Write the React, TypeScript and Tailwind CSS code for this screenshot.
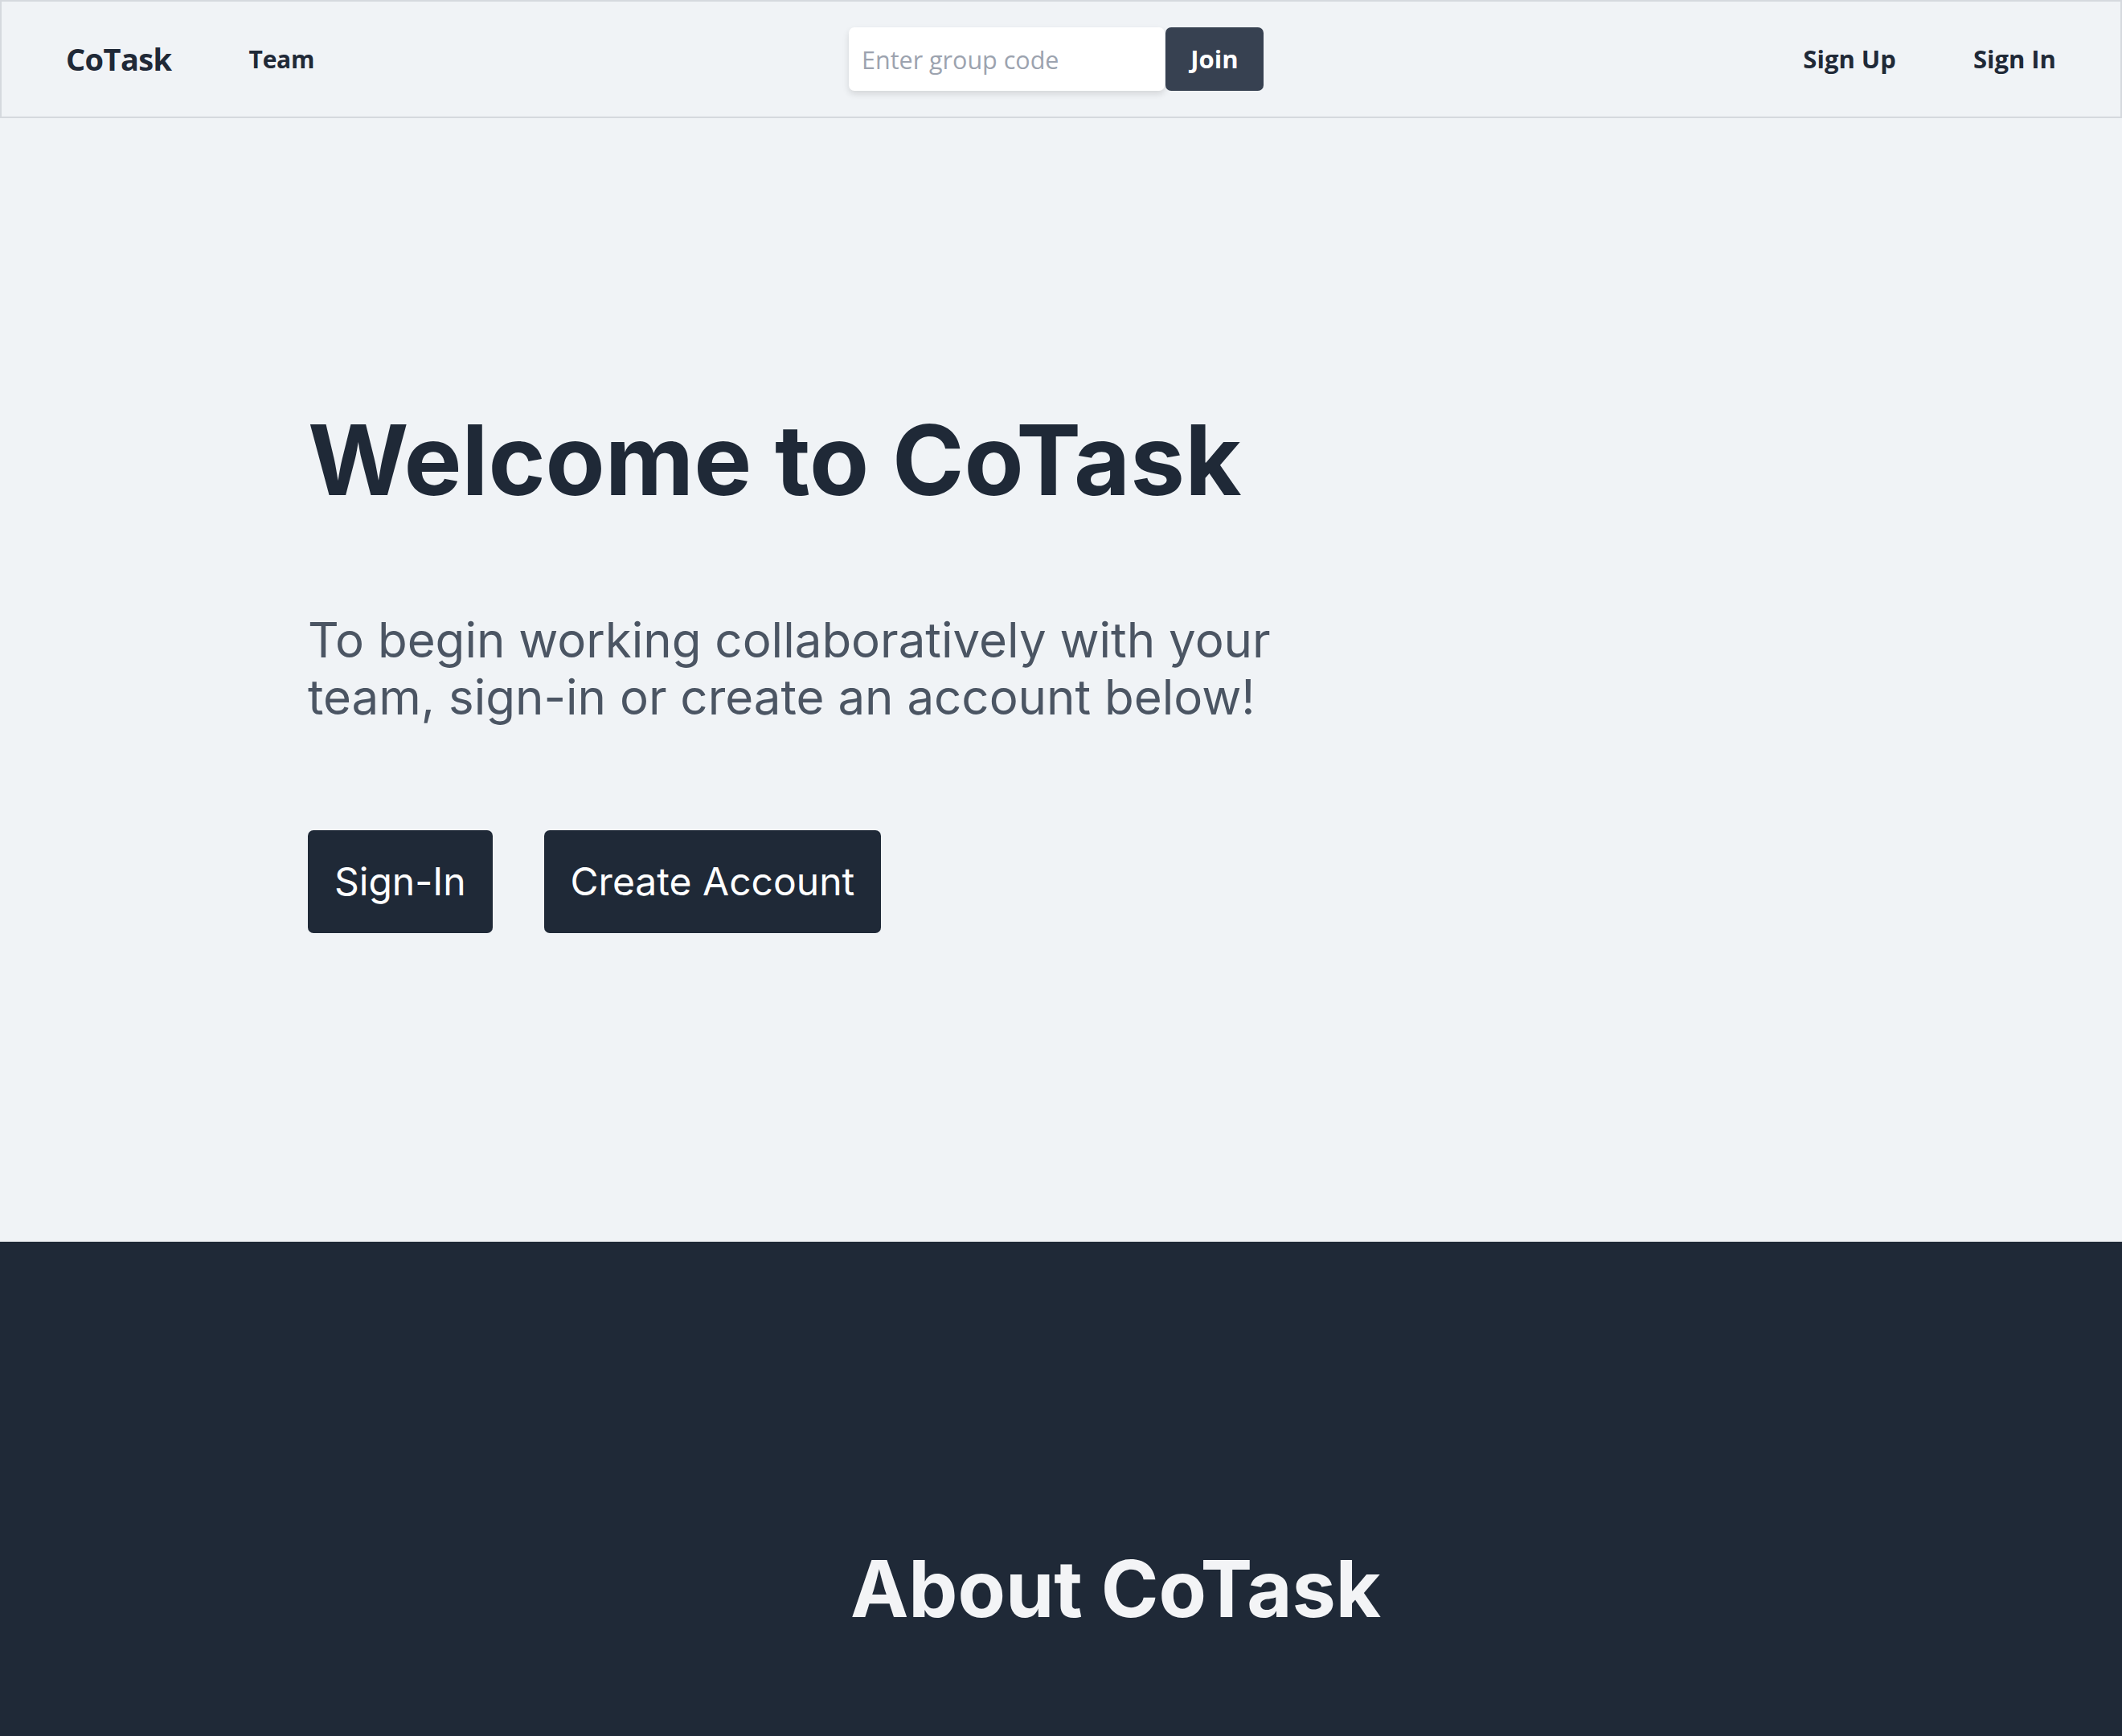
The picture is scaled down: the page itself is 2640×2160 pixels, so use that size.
import React from "react";

export default function App() {
  return (
    <div className="min-h-screen w-full bg-[#f0f3f6]">
      <nav
        className="grid h-[147px] grid-cols-[1fr_auto_1fr] items-center border-2 border-[#d5d9de] bg-[#f0f3f6] px-[80px] text-[#1f2937]"
        style={{ fontFamily: '"Open Sans", "Noto Sans", sans-serif' }}
      >
        <div className="flex items-center gap-[96px]">
          <span className="text-[38px] font-bold tracking-[-0.6px]">CoTask</span>
          <span className="text-[30px] font-bold tracking-[-0.3px]">Team</span>
        </div>
        <div className="mr-[12px] flex items-center">
          <input
            type="text"
            placeholder="Enter group code"
            className="h-[79px] w-[393px] rounded-[7px] bg-white px-[16px] text-[30.5px] text-[#1f2937] shadow-[0_4px_8px_rgba(0,0,0,0.12)] outline-none placeholder:text-[#9ca3af]"
          />
          <button className="ml-[1px] h-[79px] w-[122px] rounded-[7px] bg-[#374151] text-[31px] font-bold text-white">
            Join
          </button>
        </div>
        <div className="flex items-center justify-end gap-[96px]">
          <span className="text-[31px] font-bold">Sign Up</span>
          <span className="text-[31px] font-bold">Sign In</span>
        </div>
      </nav>

      <section
        className="pb-[384px] pl-[383px] pt-[365px]"
        style={{ fontFamily: 'Inter, "Liberation Sans", sans-serif' }}
      >
        <h1 className="text-[121px] font-bold leading-[121px] text-[#1f2937]">Welcome to CoTask</h1>
        <p className="mt-[128px] max-w-[1293px] text-[60px] leading-[71px] text-[#4b5563]">
          To begin working collaboratively with your team, sign-in or create an account below!
        </p>
        <div className="mt-[130px] flex gap-[64px]">
          <button className="h-[128px] rounded-[7px] bg-[#1f2937] px-[33px] text-[48px] text-white">
            Sign-In
          </button>
          <button className="h-[128px] rounded-[7px] bg-[#1f2937] px-[33px] text-[48px] text-white">
            Create Account
          </button>
        </div>
      </section>

      <section
        className="flex justify-center bg-[#1f2937] pb-[300px] pl-[136px] pt-[383px]"
        style={{ fontFamily: 'Inter, "Liberation Sans", sans-serif' }}
      >
        <h2 className="text-[97px] font-bold leading-none text-[#f3f4f6]">About CoTask</h2>
      </section>
    </div>
  );
}
